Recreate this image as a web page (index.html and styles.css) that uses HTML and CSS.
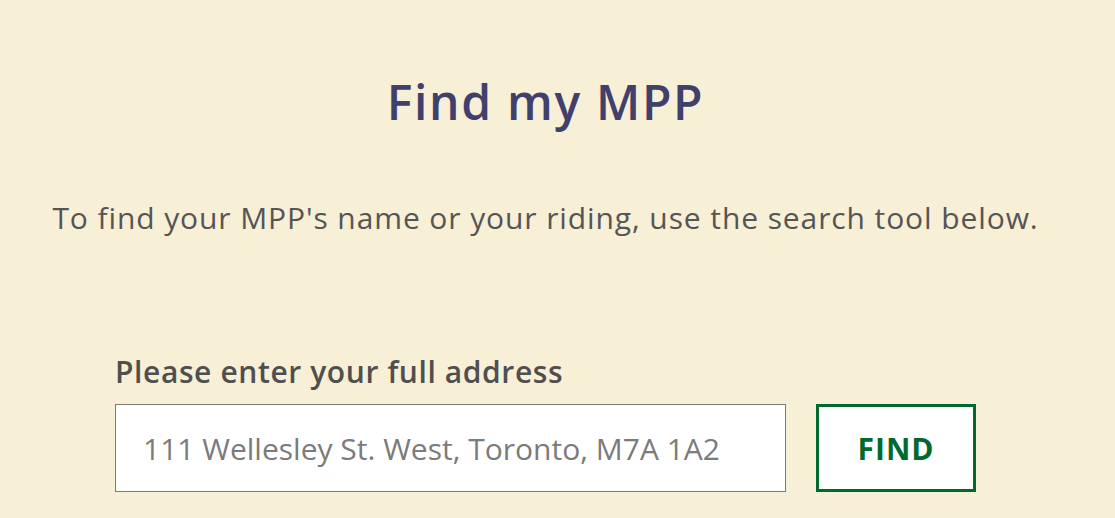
FILE: index.html
```html
<!DOCTYPE html>
<html lang="en">
<head>
<meta charset="utf-8">
<title>Find my MPP</title>
<link rel="stylesheet" href="styles.css">
</head>
<body>
<main class="page">
  <h1 class="title">Find my MPP</h1>
  <p class="intro">To find your MPP's name or your riding, use the search tool below.</p>
  <form class="search" onsubmit="return false;">
    <label class="label" for="addr">Please enter your full address</label>
    <div class="row">
      <input id="addr" class="input" type="text" placeholder="111 Wellesley St. West, Toronto, M7A 1A2">
      <button class="btn" type="submit">FIND</button>
    </div>
  </form>
</main>
</body>
</html>
```

FILE: styles.css
```css
html, body {
  margin: 0;
  padding: 0;
  background: #f8efd7;
}
body {
  font-family: "Open Sans", "Liberation Sans", sans-serif;
  height: 518px;
  overflow: hidden;
}
.page {
  width: 1091px;
  padding-top: 74px;
}
.title {
  margin: 0;
  text-align: center;
  font-size: 48px;
  line-height: 56px;
  font-weight: 600;
  letter-spacing: 1.7px;
  color: #40406b;
}
.intro {
  margin: 70px 0 0;
  text-align: center;
  font-size: 30px;
  line-height: 36px;
  letter-spacing: 0.9px;
  color: #555555;
}
.search {
  margin: 118px 0 0 115px;
}
.label {
  display: block;
  font-size: 30px;
  line-height: 36px;
  font-weight: 600;
  letter-spacing: 0.6px;
  color: #4f4f4f;
}
.row {
  display: flex;
  gap: 30px;
  margin-top: 14px;
}
.input {
  box-sizing: border-box;
  width: 671px;
  height: 88px;
  border: 1px solid #7a7a7a;
  background: #ffffff;
  padding: 0 27px;
  font-family: inherit;
  font-size: 30px;
  color: #333;
  outline: none;
}
.input::placeholder {
  color: #7b7b7b;
}
.btn {
  box-sizing: border-box;
  width: 160px;
  height: 88px;
  border: 3px solid #006a2e;
  background: #ffffff;
  color: #006a2e;
  font-family: inherit;
  font-size: 30px;
  font-weight: 700;
  letter-spacing: 1px;
  padding: 0;
}
```
